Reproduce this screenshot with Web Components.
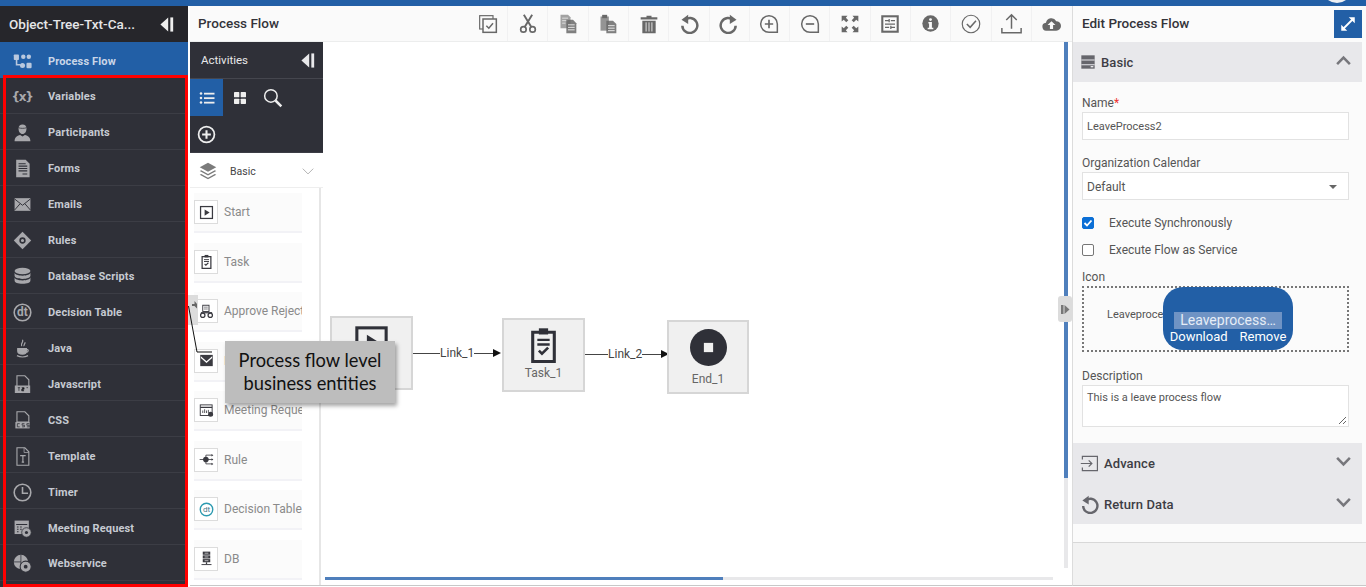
<!DOCTYPE html>
<html>
<head>
<meta charset="utf-8">
<title>Process Flow</title>
<style>
  html, body { margin: 0; height: 100%; overflow: hidden; background: #fff; font-family: Roboto, "Liberation Sans", sans-serif; }
</style>
</head>
<body>
<app-shell></app-shell>
<script>
"use strict";

(function () {
  const ICONS = {
    flow: '<g fill="currentColor"><rect x="1" y="3" width="6.500" height="7" rx="1"/><circle cx="13" cy="6" r="2.800"/><circle cx="20" cy="6" r="2.800"/><circle cx="12" cy="17" r="3.200"/><rect x="17" y="13.500" width="6.500" height="7" rx="1.500"/><path d="M3.500 10h2v5h4v2h-6z"/></g>',
    person: '<g fill="currentColor"><path d="M12 2c3 0 5 2 5 5 0 4-2 7-5 7s-5-3-5-7c0-3 2-5 5-5z"/><path d="M2 23c0-5 3-7 7-8l3 2 3-2c4 1 7 3 7 8z"/></g><path d="M7 6c3 1 7 1 10 0" stroke="#2f3038" stroke-width="1" fill="none"/>',
    form: '<path d="M4 1h12l5 5v17H4z" fill="currentColor"/><path d="M7 6h9M7 9h11M7 12h11M7 15h11M12 19h6" stroke="#2f3038" stroke-width="1.300"/>',
    mail: '<rect x="2" y="4" width="20" height="16" fill="currentColor"/><path d="M2 5l10 8 10-8M2 19l7-8M22 19l-7-8" stroke="#2f3038" stroke-width="1.200" fill="none"/>',
    rule: '<path d="M12 1l11 11-11 11L1 12z" fill="currentColor"/><circle cx="12" cy="12" r="3" fill="none" stroke="#2f3038" stroke-width="2"/>',
    db: '<g fill="currentColor"><ellipse cx="12" cy="5" rx="10" ry="4"/><path d="M2 7v4c0 2 4 4 10 4s10-2 10-4V7c0 2-4 4-10 4S2 9 2 7z"/><path d="M2 13v4c0 3 4 4 10 4s10-1 10-4v-4c0 2-4 4-10 4S2 15 2 13z"/></g>',
    dt: '<circle cx="12" cy="12" r="10.500" fill="none" stroke="currentColor" stroke-width="2"/><text x="12" y="17" font-size="15" font-family="Roboto" text-anchor="middle" fill="currentColor">dt</text>',
    java: '<g fill="none" stroke="currentColor" stroke-width="1.500"><path d="M12 1c2 3-3 4-1 8M15 4c1 2-2 3-1 5"/><path d="M6 12h11v3c0 3-2 4-5 4s-6-1-6-4z" fill="currentColor"/><path d="M17 13c3 0 3 3 0 4M5 21c4 2 10 2 14 0"/></g>',
    filejs: '<path d="M5 1h10l5 5v8H5zM3 14h18v8H3z" fill="none" stroke="currentColor" stroke-width="1.400"/><rect x="3" y="14" width="18" height="8" fill="currentColor"/><path d="M6 16h3M7.500 16v4M11 16h3v2h-3v2h3M17 16h2" stroke="#2f3038" stroke-width="1"/>',
    filecss: '<path d="M5 1h10l5 5v8H5z" fill="none" stroke="currentColor" stroke-width="1.400"/><rect x="3" y="14" width="18" height="8" fill="currentColor"/><path d="M9 16H6v4h3M15 16h-3v2h3v2h-3M21 16h-3v2h3v2h-3" stroke="#2f3038" stroke-width="1" transform="translate(-.5)" fill="none"/>',
    filet: '<path d="M5 1h10l5 5v17H5z" fill="none" stroke="currentColor" stroke-width="1.400"/><path d="M14 1v6h6" fill="none" stroke="currentColor"/><path d="M9 11h7M12.500 11v8M11 19h3" stroke="currentColor" stroke-width="1.500" fill="none"/>',
    clock: '<circle cx="12" cy="12" r="10.500" fill="none" stroke="currentColor" stroke-width="2"/><path d="M12 5v8h7" fill="none" stroke="currentColor" stroke-width="2"/>',
    meeting: '<rect x="2" y="2" width="18" height="17" fill="currentColor"/><path d="M4 7h14M5 10h2M9 10h2M5 13h2M9 13h2M5 16h2" stroke="#2f3038" stroke-width="1.300"/><circle cx="17" cy="17" r="6" fill="currentColor" stroke="#2f3038"/><circle cx="17" cy="17" r="2" fill="#2f3038"/>',
    web: '<circle cx="10" cy="10" r="9" fill="currentColor"/><path d="M10 1v18M1 10h9" stroke="#2f3038" stroke-width="1"/><circle cx="16" cy="16" r="7" fill="currentColor" stroke="#2f3038" stroke-width="1.300"/><circle cx="16" cy="16" r="2.400" fill="#2f3038"/>',
    collapse: '<path d="M13 2v20L2 12z" fill="currentColor"/><rect x="16" y="2" width="4" height="20" fill="currentColor"/>',
    list: '<g fill="currentColor"><circle cx="4" cy="6" r="1.700"/><circle cx="4" cy="12" r="1.700"/><circle cx="4" cy="18" r="1.700"/><rect x="8" y="5" width="14" height="2.400"/><rect x="8" y="11" width="14" height="2.400"/><rect x="8" y="17" width="14" height="2.400"/></g>',
    grid: '<g fill="currentColor"><rect x="3" y="3" width="8" height="8" rx="1"/><rect x="13" y="3" width="8" height="8" rx="1"/><rect x="3" y="13" width="8" height="8" rx="1"/><rect x="13" y="13" width="8" height="8" rx="1"/></g>',
    search: '<circle cx="9.500" cy="9.500" r="7.500" fill="none" stroke="currentColor" stroke-width="1.800"/><path d="M15 15l7 7" stroke="currentColor" stroke-width="3"/>',
    plus: '<circle cx="12" cy="12" r="10" fill="none" stroke="currentColor" stroke-width="2.200"/><path d="M12 6.500v11M6.500 12h11" stroke="currentColor" stroke-width="2.600"/>',
    layers: '<path d="M12 1l11 6-11 6L1 7z" fill="currentColor"/><path d="M3 11l9 5 9-5 2 1-11 6L1 12zM3 16l9 5 9-5 2 1-11 6L1 17z" fill="currentColor"/>',
    chevdown: '<path d="M3 8l9 9 9-9" fill="none" stroke="currentColor" stroke-width="1.300"/>',
    chevbold: '<path d="M3 7l9 9 9-9" fill="none" stroke="currentColor" stroke-width="3.600"/>',
    chevup: '<path d="M3 17l9-9 9 9" fill="none" stroke="currentColor" stroke-width="3.600"/>',
    select: '<rect x="2" y="2" width="16" height="16" fill="none" stroke="currentColor" stroke-width="1.400"/><rect x="6" y="6" width="16" height="16" fill="#fafafa" stroke="currentColor" stroke-width="1.800"/><path d="M10 14l3 3 5-6" fill="none" stroke="currentColor" stroke-width="1.800"/>',
    cut: '<g fill="none" stroke="currentColor"><circle cx="6.500" cy="18.500" r="3.300" stroke-width="2"/><circle cx="17.500" cy="18.500" r="3.300" stroke-width="2"/><path d="M8 15.500L17 1M16 15.500L7 1" stroke-width="2.300"/></g>',
    copy: '<path d="M3 1h9l3 3v13H3z" fill="currentColor" opacity=".6"/><path d="M5 5h7M5 8h7M5 11h4" stroke="#fafafa" stroke-width=".8"/><path d="M10 7h8l4 4v12H10z" fill="currentColor" opacity=".85"/><path d="M12 13h8M12 16h8M12 19h8" stroke="#fafafa"/>',
    paste: '<path d="M3 3h10v17H3z" fill="currentColor" opacity=".7"/><rect x="5" y="1" width="6" height="4" fill="currentColor"/><path d="M10 8h8l4 4v11H10z" fill="currentColor" opacity=".85"/><path d="M12 14h8M12 17h8M12 20h8" stroke="#fafafa"/>',
    trash: '<path d="M9 2h6v2h7v2.500H2V4h7zM4 8h16v15H4z" fill="currentColor"/><path d="M8.500 10v11M12 10v11M15.500 10v11" stroke="#fafafa" stroke-width="1"/>',
    undo: '<path d="M6.500 7.500A9 9 0 1 1 4 14" fill="none" stroke="currentColor" stroke-width="3"/><path d="M11 1v11L3 7z" fill="currentColor"/>',
    redo: '<path d="M17.500 7.500A9 9 0 1 0 20 14" fill="none" stroke="currentColor" stroke-width="3"/><path d="M13 1v11l8-5z" fill="currentColor"/>',
    zoomin: '<path d="M22 22H12A10 10 0 1 1 22 12z" fill="none" stroke="currentColor" stroke-width="1.800"/><path d="M12 7v10M7 12h10" stroke="currentColor" stroke-width="2"/>',
    zoomout: '<path d="M22 22H12A10 10 0 1 1 22 12z" fill="none" stroke="currentColor" stroke-width="1.800"/><path d="M7 12h10" stroke="currentColor" stroke-width="2"/>',
    fit: '<g fill="currentColor"><path d="M2 2h7L7 4.500l3 3L7.500 10l-3-3L2 9zM22 2h-7l2 2.500-3 3 2.500 2.500 3-3L22 9zM2 22h7l-2-2.500 3-3L7.500 14l-3 3L2 15zM22 22h-7l2-2.500-3-3 2.500-2.500 3 3 2.500-2z"/></g>',
    board: '<rect x="1.500" y="1.500" width="21" height="21" fill="currentColor"/><rect x="4" y="4" width="16" height="16" fill="#fafafa"/><path d="M6 8h5M13 8h5M6 12h12M6 16h5M13 16h5M11 6v4M13 14v4" stroke="currentColor" stroke-width="1.500"/>',
    info: '<circle cx="12" cy="12" r="11.500" fill="currentColor"/><circle cx="12" cy="6.500" r="2" fill="#fafafa"/><path d="M9 10h5v8h2v2H8v-2h2v-6H9z" fill="#fafafa"/>',
    okay: '<circle cx="12" cy="12" r="10.500" fill="none" stroke="currentColor" stroke-width="1.400"/><path d="M7 12l4 4 7-8" fill="none" stroke="currentColor" stroke-width="1.800"/>',
    upload: '<path d="M12 18V2M6 8l6-6 6 6M1 17v5.500h22V17" fill="none" stroke="currentColor" stroke-width="1.700"/>',
    cloud: '<path d="M6 21a5 5 0 0 1-1-10 7 7 0 0 1 13-2 6 6 0 0 1 0 12z" fill="currentColor"/><path d="M12 9l5 5h-3v5h-4v-5H7z" fill="#fafafa"/>',
    expand: '<path d="M6 18L18 6" fill="none" stroke="currentColor" stroke-width="2.400"/><path d="M13 3h8v8zM3 13v8h8z" fill="currentColor"/>',
    basicpanel: '<rect x="2" y="2" width="20" height="20" fill="currentColor"/><path d="M2 9h20M2 16h20" stroke="#e8e8eb" stroke-width="1.600"/><rect x="16" y="18" width="4" height="2" fill="#e8e8eb"/>',
    advance: '<path d="M3 7V3h19v18H3v-4" fill="none" stroke="currentColor" stroke-width="1.500"/><path d="M1 12h14M11 8l4 4-4 4" fill="none" stroke="currentColor" stroke-width="1.500"/>',
    play: '<rect x="2.500" y="2.500" width="19" height="19" fill="none" stroke="currentColor" stroke-width="2"/><path d="M9 7l8 5-8 5z" fill="currentColor"/>',
    clip: '<path d="M5 4h14v19H5z" fill="none" stroke="currentColor" stroke-width="2"/><rect x="9" y="1.500" width="6" height="4" fill="currentColor"/><path d="M8 9h8M8 12h8" stroke="currentColor" stroke-width="1.500"/><path d="M9 16l2 2 4-4" fill="none" stroke="currentColor" stroke-width="1.700"/>',
    approve: '<rect x="6" y="2" width="10" height="10" fill="none" stroke="currentColor" stroke-width="1.500"/><path d="M8 5h6M8 8h6" stroke="currentColor"/><circle cx="6" cy="18" r="3.500" fill="none" stroke="currentColor" stroke-width="2"/><circle cx="18" cy="18" r="3.500" fill="none" stroke="currentColor" stroke-width="2"/><path d="M3 13h18v2H3z" fill="currentColor"/>',
    mailbox: '<rect x="2" y="3" width="20" height="18" fill="currentColor"/><path d="M3 5l9 8 9-8v3l-9 8-9-8z" fill="#fff"/>',
    calendar: '<rect x="2" y="3" width="19" height="17" fill="none" stroke="currentColor" stroke-width="1.500"/><path d="M2 7h19" stroke="currentColor" stroke-width="2"/><path d="M6 16v-4M9 16v-6M12 16v-4M15 16v-5" stroke="currentColor" stroke-width="1.300"/><circle cx="18.500" cy="18" r="4" fill="currentColor"/>',
    ruletree: '<circle cx="11" cy="12" r="4.500" fill="currentColor"/><path d="M1 12h21M11 5h10M11 19h10M11 5v14" stroke="currentColor" stroke-width="1.300" fill="none"/><path d="M20 3l3 2-3 2zM20 10l3 2-3 2zM20 17l3 2-3 2z" fill="currentColor"/>',
    dtcolor: '<circle cx="12" cy="12" r="10" fill="none" stroke="#2c9ab0" stroke-width="2.200"/><text x="12" y="16.500" font-size="13" font-family="Roboto" text-anchor="middle" fill="#4a7a8c">dt</text>',
    server: '<g fill="currentColor"><rect x="6" y="1" width="12" height="5"/><rect x="6" y="7" width="12" height="5"/><rect x="6" y="13" width="12" height="5"/><rect x="11" y="18" width="2" height="3"/><rect x="4" y="21" width="16" height="1.500"/></g><path d="M9 3.500h6M9 9.500h6M9 15.500h6" stroke="#fff"/>',
    stop: '<circle cx="12" cy="12" r="12" fill="currentColor"/><rect x="9" y="9" width="6" height="6" fill="#f0f0f0"/>'
  };

  class XIcon extends HTMLElement {
    connectedCallback() {
      const size = this.getAttribute("size") || 20;
      const name = this.getAttribute("name");
      this.attachShadow({ mode: "open" }).innerHTML = `
        <style>:host { display: inline-flex; width: ${size}px; height: ${size}px; flex: none; } svg { width: 100%; height: 100%; display: block; }</style>
        <svg viewBox="0 0 24 24">${ICONS[name] || ""}</svg>`;
    }
  }

  class NavItem extends HTMLElement {
    connectedCallback() {
      const active = this.hasAttribute("active");
      const icon = this.getAttribute("icon");
      this.attachShadow({ mode: "open" }).innerHTML = `
        <style>
          :host {
            display: flex; align-items: center; height: ${active ? 36 : 35.93}px; box-sizing: border-box;
            padding: ${active ? 2 : 3}px 0 0 12px; gap: 16px;
            background: ${active ? "#225fa6" : "#2f3038"};
            border-bottom: ${active ? "0" : "1px solid #3c3d45"};
            color: ${active ? "#c9d6e8" : "#c6cad2"};
            font: 700 11px Roboto, "Liberation Sans", sans-serif; letter-spacing: .15px;
          }
          .ic { width: 20px; display: flex; justify-content: center; color: ${active ? "#b9c8de" : "#a8a8ac"}; }
          .txt { font: 700 12px "DejaVu Sans", sans-serif; color: #a8a8ac; letter-spacing: -1.2px; }
        </style>
        <span class="ic">${icon === "vars" ? '<span class="txt">{x}</span>' : `<x-icon name="${icon}" size="${this.getAttribute("size") || 19}"></x-icon>`}</span>
        <slot></slot>`;
    }
  }

  class SideNav extends HTMLElement {
    connectedCallback() {
      const items = [
        ["vars", "Variables"], ["person", "Participants"], ["form", "Forms"], ["mail", "Emails"],
        ["rule", "Rules"], ["db", "Database Scripts"], ["dt", "Decision Table"], ["java", "Java"],
        ["filejs", "Javascript"], ["filecss", "CSS"], ["filet", "Template"], ["clock", "Timer"],
        ["meeting", "Meeting Request"], ["web", "Webservice"]
      ];
      this.attachShadow({ mode: "open" }).innerHTML = `
        <style>
          :host { display: flex; flex-direction: column; width: 188px; flex: none; background: #2f3038; position: relative; }
          .title {
            height: 36px; background: #26262b; color: #e6e6e8; display: flex; align-items: center;
            justify-content: space-between; padding: 0 12px 0 9px;
            font: 500 13.500px Roboto, "Liberation Sans", sans-serif;
          }
          .title x-icon { color: #eee; }
          .mark { position: absolute; left: 3px; top: 69px; right: 0; bottom: 0; border: 3px solid #f00; pointer-events: none; box-sizing: border-box; }
        </style>
        <div class="title"><span>Object-Tree-Txt-Ca...</span><x-icon name="collapse" size="17"></x-icon></div>
        <nav-item icon="flow" active>Process Flow</nav-item>
        ${items.map(([i, t]) => `<nav-item icon="${i}">${t}</nav-item>`).join("")}
        <div class="mark"></div>`;
    }
  }

  class TopTools extends HTMLElement {
    connectedCallback() {
      const tools = [["select", 20], ["cut", 20], ["copy", 20], ["paste", 20], ["trash", 20], ["undo", 20], ["redo", 20], ["zoomin", 20], ["zoomout", 20], ["fit", 20], ["board", 20], ["info", 17], ["okay", 20], ["upload", 21], ["cloud", 19]];
      this.attachShadow({ mode: "open" }).innerHTML = `
        <style>
          :host {
            display: flex; height: 36px; flex: none; background: #fafafa; box-sizing: border-box;
            border-bottom: 1px solid #eceded; color: #3a3a40; align-items: center;
          }
          .name { font: 500 13.500px Roboto, "Liberation Sans", sans-serif; padding: 0 0 2px 8px; width: 270px; color: #34343a; }
          .cell { width: 40.300px; height: 100%; display: flex; align-items: center; justify-content: center; border-right: 1px solid #f1f1f2; box-sizing: border-box; color: #686868; }
          .cell:last-child { border-right: 0; }
        </style>
        <span class="name">Process Flow</span>
        ${tools.map(([t, s]) => `<span class="cell"><x-icon name="${t}" size="${s}"></x-icon></span>`).join("")}`;
    }
  }

  class ActivityItem extends HTMLElement {
    connectedCallback() {
      const icon = this.getAttribute("icon");
      this.attachShadow({ mode: "open" }).innerHTML = `
        <style>
          :host {
            display: flex; align-items: center; gap: 6px; width: 108px; height: 40px; box-sizing: border-box;
            background: #fbfbfb; border-bottom: 2px solid #f2f2f6; overflow: hidden; white-space: nowrap;
            font: 400 12px Roboto, "Liberation Sans", sans-serif; color: #8a8a8a;
          }
          .box { width: 24px; height: 24px; box-sizing: border-box; border: 1px solid #dcdcdc; background: #fff; display: flex; align-items: center; justify-content: center; flex: none; color: #3a3a40; }
        </style>
        <span class="box"><x-icon name="${icon}" size="15"></x-icon></span><slot></slot>`;
    }
  }

  class ActivityPanel extends HTMLElement {
    connectedCallback() {
      const items = [
        ["play", "Start"], ["clip", "Task"], ["approve", "Approve Reject"], ["mailbox", "Email"],
        ["calendar", "Meeting Request"], ["ruletree", "Rule"], ["dtcolor", "Decision Table"], ["server", "DB"]
      ];
      this.attachShadow({ mode: "open" }).innerHTML = `
        <style>
          :host { display: flex; flex-direction: column; width: 133px; flex: none; background: #fff; position: relative; }
          .head {
            height: 37px; flex: none; background: #2f3038; color: #e8e8ea; display: flex; align-items: center;
            justify-content: space-between; padding: 0 6px 1px 11px; box-sizing: border-box;
            border-bottom: 1px solid #45464e; font: 400 11.500px Roboto, "Liberation Sans", sans-serif;
          }
          .head x-icon { margin-top: 1px; }
          .tabs { height: 74px; flex: none; background: #2f3038; display: grid; grid-template-columns: 33px 34px 32px; grid-auto-rows: 37px; color: #eee; box-sizing: border-box; border-bottom: 1px solid #3c3d45; }
          .tabs span { display: flex; align-items: center; justify-content: center; }
          .tabs .on { background: #225fa6; }
          .group {
            height: 35px; flex: none; display: flex; align-items: center; padding: 2px 0 0 9px; box-sizing: border-box;
            border-bottom: 1px solid #eee; color: #7b7b7b; font: 400 10.500px Roboto, "Liberation Sans", sans-serif;
          }
          .group b { font-weight: 400; color: #444; margin-left: 13px; flex: 1; }
          .group .chev { margin-right: 8px; color: #9a9a9a; }
          .list { flex: 1; display: flex; flex-direction: column; gap: 9.500px; padding: 5px 0 0 4px; border-right: 2px solid #e6e6e6; margin-right: 2px; overflow: hidden; }
        </style>
        <div class="head"><span>Activities</span><x-icon name="collapse" size="17"></x-icon></div>
        <div class="tabs">
          <span class="on"><x-icon name="list" size="18"></x-icon></span>
          <span><x-icon name="grid" size="16"></x-icon></span>
          <span><x-icon name="search" size="20"></x-icon></span>
          <span><x-icon name="plus" size="19"></x-icon></span>
        </div>
        <div class="group"><x-icon name="layers" size="18"></x-icon><b>Basic</b><x-icon class="chev" name="chevdown" size="14"></x-icon></div>
        <div class="list">${items.map(([i, t]) => `<activity-item icon="${i}">${t}</activity-item>`).join("")}</div>`;
    }
  }

  class FlowNode extends HTMLElement {
    connectedCallback() {
      const icon = this.getAttribute("icon");
      const label = this.getAttribute("label") || "";
      const pad = this.getAttribute("pad") || 6;
      const gap = this.getAttribute("gap") || 3;
      this.attachShadow({ mode: "open" }).innerHTML = `
        <style>
          :host {
            position: absolute; width: 83px; height: 74px; box-sizing: border-box;
            background: #f0f0f0; border: 2px solid #d6d6d6; display: flex; flex-direction: column; align-items: center;
            padding-top: ${pad}px; color: #2f3038; font: 400 12px Roboto, "Liberation Sans", sans-serif;
          }
          span { color: #666; margin-top: ${gap}px; line-height: 14px; }
        </style>
        <x-icon name="${icon}" size="37"></x-icon><span>${label}</span>`;
    }
  }

  class FlowLink extends HTMLElement {
    connectedCallback() {
      const lead = this.getAttribute("lead") || 27;
      this.attachShadow({ mode: "open" }).innerHTML = `
        <style>
          :host { position: absolute; display: flex; align-items: center; height: 14px; color: #444; font: 400 12px Roboto, "Liberation Sans", sans-serif; }
          i { width: ${lead}px; height: 1px; background: #444; display: block; }
          i.end { width: 19px; }
          b { width: 0; height: 0; border-left: 8px solid #111; border-top: 4px solid transparent; border-bottom: 4px solid transparent; }
        </style>
        <i></i><span><slot></slot></span><i class="end"></i><b></b>`;
    }
  }

  class FlowCanvas extends HTMLElement {
    connectedCallback() {
      this.attachShadow({ mode: "open" }).innerHTML = `
        <style>
          :host { display: block; flex: 1; position: relative; background: #fff; overflow: hidden; }
          .vtrack { position: absolute; left: 741px; top: 0; width: 4px; height: 526px; background: #e8e8ea; }
          .vthumb { position: absolute; left: 741px; top: 0; width: 4px; height: 436px; background: #4f7fbc; }
          .htrack { position: absolute; left: 2px; top: 535px; width: 728px; height: 3px; background: #e8e8ea; }
          .hthumb { position: absolute; left: 2px; top: 535px; width: 398px; height: 3px; background: #4f7fbc; }
          .grip { position: absolute; left: 735px; top: 254px; width: 14px; height: 26px; background: #dcdcdc; border-radius: 3px; display: flex; align-items: center; justify-content: center; color: #777; }
        </style>
        <flow-node icon="play" style="left:7px;top:274px"></flow-node>
        <flow-link style="left:90px;top:304px">Link_1</flow-link>
        <flow-node icon="clip" label="Task_1" gap="3" style="left:179px;top:276px"></flow-node>
        <flow-link lead="23" style="left:262px;top:305px">Link_2</flow-link>
        <flow-node icon="stop" label="End_1" pad="7" gap="6" style="left:344px;top:278px;width:82px"></flow-node>
        <div class="vtrack"></div><div class="vthumb"></div>
        <div class="htrack"></div><div class="hthumb"></div>
        <div class="grip"><svg width="9" height="11" viewBox="0 0 9 11"><rect x="0" y="1" width="2.500" height="9" fill="currentColor"/><path d="M3.500 1l5 4.500-5 4.500z" fill="currentColor"/></svg></div>`;
    }
  }

  class PanelHead extends HTMLElement {
    connectedCallback() {
      const open = this.hasAttribute("open");
      const size = this.getAttribute("size") || 19;
      this.attachShadow({ mode: "open" }).innerHTML = `
        <style>
          :host {
            display: flex; align-items: center; height: ${this.getAttribute("h") || 40}px; background: #e8e8eb; flex: none;
            padding: 0 10px 0 7px; box-sizing: border-box; gap: 5px; color: #3d3d44;
            font: 500 13px Roboto, "Liberation Sans", sans-serif; letter-spacing: .1px;
          }
          x-icon { color: #66666c; }
          span { flex: 1; }
          .c { color: #77777c; margin-top: -4px; }
        </style>
        <x-icon name="${this.getAttribute("icon")}" size="${size}"></x-icon><span><slot></slot></span>
        <x-icon class="c" name="${open ? "chevup" : "chevbold"}" size="17"></x-icon>`;
    }
  }

  class EditPanel extends HTMLElement {
    connectedCallback() {
      this.attachShadow({ mode: "open" }).innerHTML = `
        <style>
          :host {
            display: flex; flex-direction: column; width: 294px; flex: none; background: #fbfbfb; box-sizing: border-box;
            border-left: 1px solid #dcdcdc; border-bottom: 1px solid #c8c8c8; margin-bottom: 1px;
            font: 400 12px Roboto, "Liberation Sans", sans-serif; color: #555;
          }
          .top { height: 36px; display: flex; align-items: center; justify-content: space-between; padding: 0 4px 0 9px; flex: none; font: 500 13.500px Roboto, "Liberation Sans", sans-serif; color: #34343a; }
          .top > span:first-child { margin-top: -2px; }
          .exp { width: 28px; height: 28px; background: #225fa6; color: #fff; display: flex; align-items: center; justify-content: center; }
          .acc { margin-right: 4px; display: flex; flex-direction: column; }
          .form { display: flex; flex-direction: column; padding: 13px 16px 16px 9px; height: 361px; box-sizing: border-box; margin-right: -3px; }
          label { display: block; height: 16px; line-height: 16px; }
          .req { color: #e33; }
          .inp {
            height: 28px; margin-top: 1px; background: #fff; border: 1px solid #e2e2e2; box-sizing: border-box; display: flex; align-items: center;
            padding: 2px 4px 0; font-size: 11px; color: #555; justify-content: space-between;
          }
          .sel { font-size: 12px; padding: 2px 11px 0 4px; }
          .caret { width: 0; height: 0; border-top: 4px solid #666; border-left: 4px solid transparent; border-right: 4px solid transparent; }
          .chk { display: flex; align-items: center; gap: 15px; height: 27px; }
          .box { width: 12px; height: 12px; box-sizing: border-box; border: 1px solid #767676; border-radius: 2px; background: #fff; flex: none; }
          .box.on { background: #0b6fd6; border-color: #0b6fd6; display: flex; align-items: center; justify-content: center; }
          .upload { position: relative; height: 66px; border: 2px dotted #777; box-sizing: border-box; margin-top: 1px; }
          .upload .fname { position: absolute; left: 23px; top: 20px; font-size: 11px; }
          .drop {
            position: absolute; left: 79px; top: -1px; width: 130px; height: 63px; background: #225fa6; border-radius: 20px; color: #fff;
            display: flex; flex-direction: column; align-items: center; justify-content: flex-end; font-size: 14px; padding-bottom: 5px; box-sizing: border-box; line-height: 16px;
          }
          .drop .hl { background: #6f93c4; color: #e6edf6; width: 108px; height: 17px; line-height: 17px; text-align: center; }
          .drop .acts { display: flex; gap: 12px; font-size: 13px; }
          .desc { height: 42px; padding: 5px 4px; align-items: flex-start; position: relative; font-size: 11px; }
          .desc svg { position: absolute; right: 1px; bottom: 1px; }
          .gap { height: 11px; flex: none; }
          .foot { flex: 1; background: #f2f2f2; border-top: 1px solid #d8d8d8; margin-top: 18px; }
        </style>
        <div class="top"><span>Edit Process Flow</span><span class="exp"><x-icon name="expand" size="18"></x-icon></span></div>
        <div class="acc">
          <panel-head icon="basicpanel" size="16" open>Basic</panel-head>
          <div class="form">
            <label>Name<span class="req">*</span></label>
            <div class="inp">LeaveProcess2</div>
            <div class="gap" style="height:15px"></div>
            <label>Organization Calendar</label>
            <div class="inp sel"><span>Default</span><i class="caret"></i></div>
            <div class="gap" style="height:10px"></div>
            <div class="chk"><span class="box on"><svg width="10" height="10" viewBox="0 0 10 10"><path d="M1.500 5l2.500 2.500 4.500-5" fill="none" stroke="#fff" stroke-width="1.800"/></svg></span>Execute Synchronously</div>
            <div class="chk"><span class="box"></span>Execute Flow as Service</div>
            <label style="margin-top:6px">Icon</label>
            <div class="upload">
              <span class="fname">Leaveproce</span>
              <div class="drop"><span class="hl">Leaveprocess…</span><div class="acts"><span>Download</span><span>Remove</span></div></div>
            </div>
            <div class="gap" style="height:16px"></div>
            <label>Description</label>
            <div class="inp desc">This is a leave process flow<svg width="9" height="9" viewBox="0 0 9 9"><path d="M1 8l7-7M5 8l3-3" stroke="#666"/></svg></div>
          </div>
          <panel-head icon="advance" h="41">Advance</panel-head>
          <panel-head icon="undo" h="40">Return Data</panel-head>
        </div>
        <div class="foot"></div>`;
    }
  }

  class FlowCallout extends HTMLElement {
    connectedCallback() {
      this.attachShadow({ mode: "open" }).innerHTML = `
        <style>
          :host { position: absolute; left: 188px; top: 295px; width: 207px; height: 108px; display: block; pointer-events: none; }
          .grip { position: absolute; left: 0; top: 0; width: 10px; height: 30px; background: #dcdcdc; }
          svg { position: absolute; left: 0; top: 0; }
          .note {
            position: absolute; left: 37px; top: 46px; width: 170px; height: 62px; background: #bdbdbd; box-shadow: 2px 3px 4px rgba(0,0,0,.35);
            display: flex; align-items: center; justify-content: center; text-align: center; box-sizing: border-box;
            font: 400 18.300px/23px Lato, "Open Sans", sans-serif; color: #111;
          }
        </style>
        <div class="grip"></div>
        <svg width="40" height="70" viewBox="0 0 40 70"><path d="M4 9h2.500v-3l2.500 3v4.500L6.500 11H4z" fill="#666"/><path d="M0.500 11L9 57H24" fill="none" stroke="#111" stroke-width="1"/></svg>
        <div class="note">Process flow level<br>business entities</div>`;
    }
  }

  class AppShell extends HTMLElement {
    connectedCallback() {
      this.attachShadow({ mode: "open" }).innerHTML = `
        <style>
          :host { display: flex; flex-direction: column; width: 1366px; height: 587px; position: relative; overflow: hidden; background: #fff; }
          .bar { height: 6px; background: #225fa6; flex: none; position: relative; overflow: hidden; }
          .bar i { position: absolute; left: 1322px; top: -27px; width: 30px; height: 30px; border-radius: 50%; background: #eef0f3; }
          .main { display: flex; flex: 1; min-height: 0; }
          .mid { flex: 1; display: flex; flex-direction: column; margin: 0 0 1px 2px; min-width: 0; border-bottom: 1px solid #c8c8c8; }
          .work { flex: 1; display: flex; min-height: 0; }
        </style>
        <div class="bar"><i></i></div>
        <div class="main">
          <side-nav></side-nav>
          <div class="mid">
            <top-tools></top-tools>
            <div class="work"><activity-panel></activity-panel><flow-canvas></flow-canvas></div>
          </div>
          <edit-panel></edit-panel>
        </div>
        <flow-callout></flow-callout>`;
    }
  }

  customElements.define("x-icon", XIcon);
  customElements.define("nav-item", NavItem);
  customElements.define("side-nav", SideNav);
  customElements.define("top-tools", TopTools);
  customElements.define("activity-item", ActivityItem);
  customElements.define("activity-panel", ActivityPanel);
  customElements.define("flow-node", FlowNode);
  customElements.define("flow-link", FlowLink);
  customElements.define("flow-canvas", FlowCanvas);
  customElements.define("panel-head", PanelHead);
  customElements.define("edit-panel", EditPanel);
  customElements.define("flow-callout", FlowCallout);
  customElements.define("app-shell", AppShell);
})();
</script>
</body>
</html>
